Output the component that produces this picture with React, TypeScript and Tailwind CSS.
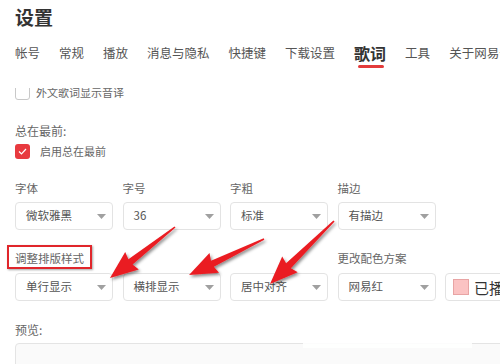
import React from "react";

const tabs = ["帐号", "常规", "播放", "消息与隐私", "快捷键", "下载设置", "歌词", "工具", "关于网易云音乐"];

const fontRow = [
  { label: "字体", value: "微软雅黑" },
  { label: "字号", value: "36" },
  { label: "字粗", value: "标准" },
  { label: "描边", value: "有描边" },
];

const layoutRow = ["单行显示", "横排显示", "居中对齐", "网易红"];

const arrows: { tail: [number, number]; tip: [number, number] }[] = [
  { tail: [175, 227], tip: [110, 278] },
  { tail: [264, 239], tip: [189, 275] },
  { tail: [334, 221], tip: [270, 284] },
];

function arrowPoints(tail: [number, number], tip: [number, number]) {
  const dx = tip[0] - tail[0];
  const dy = tip[1] - tail[1];
  const len = Math.hypot(dx, dy);
  const ux = dx / len;
  const uy = dy / len;
  const nx = -uy;
  const ny = ux;
  const L = 26;
  const W = 11;
  const bx = tip[0] - ux * L;
  const by = tip[1] - uy * L;
  const pts: [number, number][] = [
    [tail[0] + nx * 0.8, tail[1] + ny * 0.8],
    [bx + nx * 3.4, by + ny * 3.4],
    [bx + nx * W - ux * 2, by + ny * W - uy * 2],
    [tip[0], tip[1]],
    [bx - nx * W - ux * 2, by - ny * W - uy * 2],
    [bx - nx * 3.4, by - ny * 3.4],
    [tail[0] - nx * 0.8, tail[1] - ny * 0.8],
  ];
  return pts.map((p) => `${p[0].toFixed(1)},${p[1].toFixed(1)}`).join(" ");
}

function Caret() {
  return (
    <svg width="9" height="5" viewBox="0 0 9 5" className="shrink-0">
      <path d="M0 0H9L4.5 5Z" fill="#a0a0a0" />
    </svg>
  );
}

function Select({ value }: { value: string }) {
  return (
    <div className="flex h-[28px] w-[98px] shrink-0 items-center justify-between rounded-[4px] border border-[#e3e3e3] bg-white pl-[10px] pr-[6px]">
      <span className="text-[11.5px] leading-none text-[#555]">{value}</span>
      <Caret />
    </div>
  );
}

export default function App() {
  return (
    <div className="relative h-[364px] w-[500px] overflow-hidden bg-white font-['Noto_Sans_CJK_SC',sans-serif] text-[#555]">
      {/* header */}
      <div className="h-[88px] pl-[15px] pt-[5px]">
        <h1 className="text-[19px] font-bold leading-[24px] text-[#333]">设置</h1>
        <div className="mt-[14px] flex items-center gap-[19px] whitespace-nowrap">
          {tabs.map((t) =>
            t === "歌词" ? (
              <span key={t} className="relative text-[16px] font-bold leading-[20px] text-[#333]">
                {t}
                <span className="absolute left-[4px] top-[22px] h-[3px] w-[26px] rounded-full bg-[#e33b3b]" />
              </span>
            ) : (
              <span key={t} className="text-[12.5px] leading-[20px] text-[#555]">
                {t}
              </span>
            ),
          )}
        </div>
      </div>

      {/* scrolled content */}
      <div className="h-[276px] overflow-hidden">
        <div className="-mt-[3px] flex flex-col px-[15px]">
          <label className="flex h-[15px] items-center gap-[6px]">
            <span className="h-[15px] w-[15px] rounded-[3px] border border-[#c8c8c8] bg-white" />
            <span className="text-[11px] leading-none text-[#666]">外文歌词显示音译</span>
          </label>

          <p className="mt-[23px] text-[12px] leading-[16px] text-[#666]">总在最前:</p>
          <label className="mt-[5px] flex h-[15px] items-center gap-[10px]">
            <span className="flex h-[15px] w-[15px] items-center justify-center rounded-[3px] bg-[#e83a3f]">
              <svg width="9" height="7" viewBox="0 0 9 7">
                <path d="M1 3.5L3.5 6L8 1" fill="none" stroke="white" strokeWidth="1.2" />
              </svg>
            </span>
            <span className="text-[11px] leading-none text-[#666]">启用总在最前</span>
          </label>

          <div className="mt-[21px] flex gap-[9.5px]">
            {fontRow.map((f) => (
              <div key={f.label} className="flex w-[98px] shrink-0 flex-col">
                <span className="text-[11.5px] leading-[16px] text-[#666]">{f.label}</span>
                <div className="mt-[6px]">
                  <Select value={f.value} />
                </div>
              </div>
            ))}
          </div>

          <div className="mt-[20px] flex items-start">
            <div className="relative flex w-[322.5px] shrink-0">
              <span className="block text-[11.5px] leading-[16px] text-[#666]">调整排版样式</span>
              <span className="absolute -left-[8px] -top-[5px] h-[24px] w-[85px] border-2 border-[#e0262b] shadow-[1px_1px_2px_rgba(0,0,0,0.35)]" />
            </div>
            <span className="block text-[11.5px] leading-[16px] text-[#666]">更改配色方案</span>
          </div>

          <div className="mt-[7px] flex gap-[9.5px]">
            {layoutRow.map((v) => (
              <Select key={v} value={v} />
            ))}
            <div className="flex h-[28px] w-[98px] shrink-0 items-center gap-[5px] rounded-[4px] border border-[#e3e3e3] bg-white pl-[7px]">
              <span className="h-[16px] w-[16px] border border-[#e8a4a4] bg-[#fbc3c3]" />
              <span className="whitespace-nowrap text-[15px] leading-none text-[#333]">已播放</span>
            </div>
          </div>

          <p className="mt-[21px] text-[12px] leading-[16px] text-[#666]">预览:</p>
          <div className="mt-[5px] h-[80px] w-[500px] shrink-0 rounded-[4px] border border-[#e4e4e4] bg-[#fafafa]" />
        </div>
      </div>

      {/* faint overlay on preview border */}
      <div className="absolute left-[303px] top-[338px] h-[10px] w-[169px] bg-white/90" />

      {/* annotation arrows */}
      <svg className="pointer-events-none absolute inset-0" width="500" height="364" viewBox="0 0 500 364">
        <defs>
          <filter id="sh" x="-20%" y="-20%" width="140%" height="140%">
            <feDropShadow dx="1.5" dy="2" stdDeviation="1.5" floodColor="#000" floodOpacity="0.45" />
          </filter>
        </defs>
        {arrows.map((a, i) => (
          <polygon key={i} points={arrowPoints(a.tail, a.tip)} fill="#ea1c22" filter="url(#sh)" />
        ))}
      </svg>
    </div>
  );
}
